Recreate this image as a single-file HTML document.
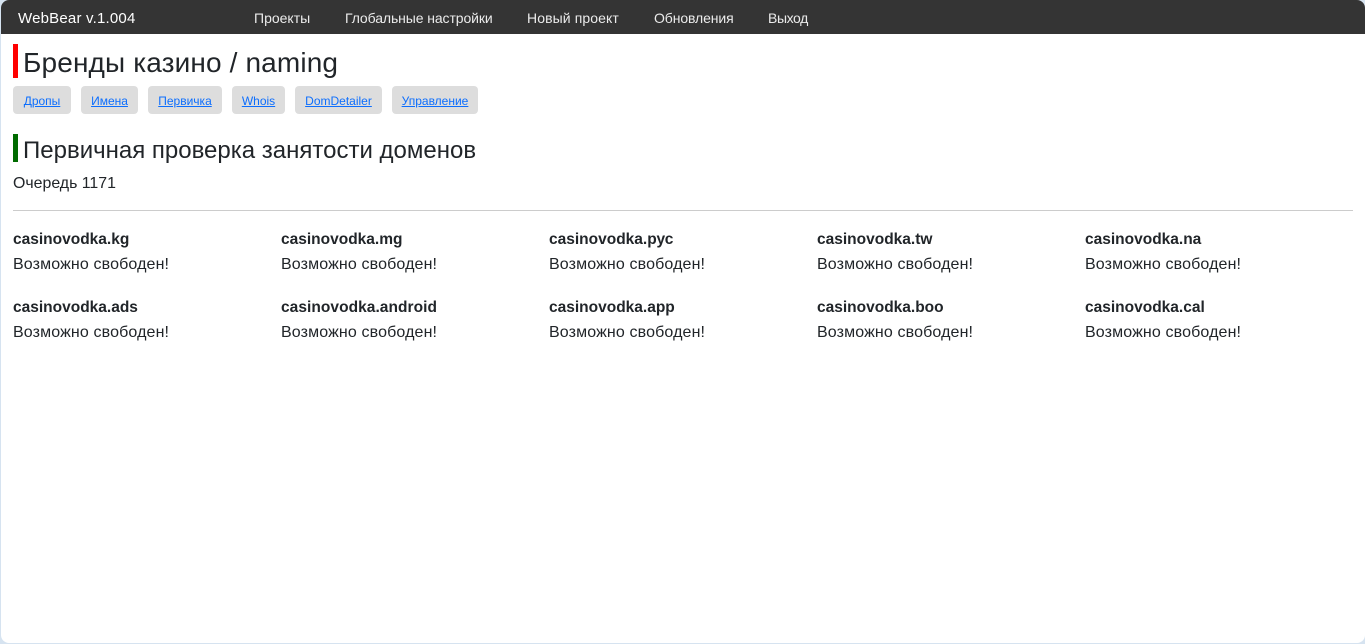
<!DOCTYPE html>
<html lang="ru">
<head>
<meta charset="utf-8">
<title>WebBear</title>
<style>
html,body{margin:0;padding:0;width:1365px;height:644px;overflow:hidden;background:#d6e3f0}
body{font-family:"Liberation Sans",sans-serif;color:#212529;font-size:16px}
#win{position:absolute;left:1px;top:0;width:1364px;height:643px;background:#fff;border-radius:8px 8px 8px 8px;overflow:hidden}
.t{position:absolute;white-space:nowrap;line-height:20px}
.n{color:rgba(255,255,255,.9);font-size:14px;top:8px}
.bar{position:absolute;left:13px;width:5px}
.b{position:absolute;top:86px;height:28px;background:#ddd;border-radius:4px;font-size:12px;line-height:30px;text-align:center}
.b a{color:#0d6efd;text-decoration:underline}
.d{font-weight:bold;font-size:15.5px}
.s{font-size:16px;letter-spacing:.13px}
</style>
</head>
<body>
<div id="win"></div>
<div style="position:absolute;left:0;top:0;width:1365px;height:644px">
<div style="position:absolute;left:1px;top:0;width:1364px;height:34px;background:#343434;border-radius:8px 8px 0 0"></div>
<div class="t" style="left:18px;top:9px;color:#fff;font-size:15px;letter-spacing:.2px">WebBear v.1.004</div>
<div class="t n" style="left:254px">Проекты</div>
<div class="t n" style="left:345px;letter-spacing:-.1px">Глобальные настройки</div>
<div class="t n" style="left:527px;letter-spacing:.1px">Новый проект</div>
<div class="t n" style="left:654px;letter-spacing:-.1px">Обновления</div>
<div class="t n" style="left:768px;letter-spacing:-.4px">Выход</div>

<div class="bar" style="top:44px;height:34px;background:#f00"></div>
<div class="t" style="left:23px;top:46px;font-size:28px;line-height:34px;letter-spacing:.14px">Бренды казино / naming</div>

<div class="b" style="left:13px;width:58px"><a>Дропы</a></div>
<div class="b" style="left:81px;width:57px"><a>Имена</a></div>
<div class="b" style="left:148px;width:74px"><a>Первичка</a></div>
<div class="b" style="left:232px;width:53px"><a>Whois</a></div>
<div class="b" style="left:295px;width:87px"><a>DomDetailer</a></div>
<div class="b" style="left:392px;width:86px"><a>Управление</a></div>

<div class="bar" style="top:134px;height:28px;background:#006b00"></div>
<div class="t" style="left:23px;top:137px;font-size:24px;line-height:28px">Первичная проверка занятости доменов</div>
<div class="t" style="left:13px;top:174px;font-size:15.9px">Очередь 1171</div>
<div style="position:absolute;left:13px;top:210px;width:1340px;height:1px;background:#ccc"></div>

<div class="t d" style="left:13px;top:230px">casinovodka.kg</div><div class="t s" style="left:13px;top:255px">Возможно свободен!</div>
<div class="t d" style="left:281px;top:230px">casinovodka.mg</div><div class="t s" style="left:281px;top:255px">Возможно свободен!</div>
<div class="t d" style="left:549px;top:230px">casinovodka.рус</div><div class="t s" style="left:549px;top:255px">Возможно свободен!</div>
<div class="t d" style="left:817px;top:230px">casinovodka.tw</div><div class="t s" style="left:817px;top:255px">Возможно свободен!</div>
<div class="t d" style="left:1085px;top:230px">casinovodka.na</div><div class="t s" style="left:1085px;top:255px">Возможно свободен!</div>

<div class="t d" style="left:13px;top:298px">casinovodka.ads</div><div class="t s" style="left:13px;top:323px">Возможно свободен!</div>
<div class="t d" style="left:281px;top:298px;letter-spacing:.05px">casinovodka.android</div><div class="t s" style="left:281px;top:323px">Возможно свободен!</div>
<div class="t d" style="left:549px;top:298px">casinovodka.app</div><div class="t s" style="left:549px;top:323px">Возможно свободен!</div>
<div class="t d" style="left:817px;top:298px">casinovodka.boo</div><div class="t s" style="left:817px;top:323px">Возможно свободен!</div>
<div class="t d" style="left:1085px;top:298px">casinovodka.cal</div><div class="t s" style="left:1085px;top:323px">Возможно свободен!</div>
</div>
</body>
</html>
